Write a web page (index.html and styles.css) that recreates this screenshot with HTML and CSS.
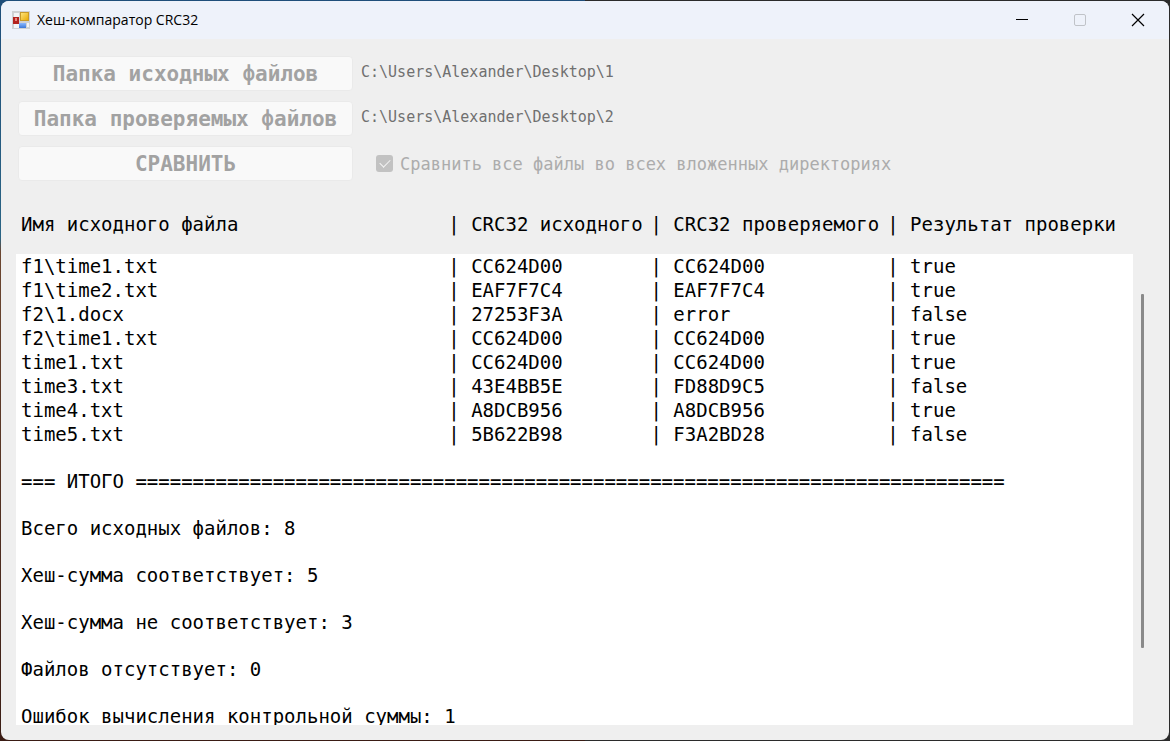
FILE: index.html
```
<!DOCTYPE html>
<html lang="ru">
<head>
<meta charset="utf-8">
<title>Хеш-компаратор CRC32</title>
<link rel="stylesheet" href="styles.css">
</head>
<body class="desktop">
<div class="window">
  <header class="titlebar">
    <svg class="app-icon" width="18" height="18" viewBox="0 0 18 18" aria-hidden="true">
      <defs>
        <linearGradient id="gold" x1="0" y1="0" x2="1" y2="1"><stop offset="0" stop-color="#ffe680"/><stop offset="1" stop-color="#e8a800"/></linearGradient>
        <linearGradient id="blue" x1="0" y1="0" x2="0" y2="1"><stop offset="0" stop-color="#8bb8ff"/><stop offset="1" stop-color="#3c78d8"/></linearGradient>
      </defs>
      <rect width="18" height="18" fill="#cfd1d4"/>
      <rect x="2" y="2" width="5" height="4" fill="#f3f4f6"/>
      <rect x="2" y="13" width="5" height="4" fill="#f3f4f6"/>
      <rect x="15" y="12" width="2" height="4" fill="#f3f4f6"/>
      <rect x="1" y="6" width="6" height="7" fill="#b3221e"/>
      <rect x="3" y="7" width="2" height="3" fill="#e8857f"/>
      <rect x="8.500" y="1.500" width="8" height="8" fill="url(#gold)" stroke="#c89a28"/>
      <rect x="7" y="12" width="7" height="5" fill="url(#blue)"/>
    </svg>
    <h1 class="title">Хеш-компаратор CRC32</h1>
    <div class="caption-buttons">
      <button class="caption" type="button" aria-label="Свернуть"><svg width="14" height="14" viewBox="0 0 14 14"><path d="M1 6.500H13" stroke="#000"/></svg></button>
      <button class="caption" type="button" aria-label="Развернуть" disabled><svg width="14" height="14" viewBox="0 0 14 14"><rect x="1.500" y="1.500" width="11" height="11" rx="1.500" fill="none" stroke="#c0c3c8"/></svg></button>
      <button class="caption" type="button" aria-label="Закрыть"><svg width="14" height="14" viewBox="0 0 14 14"><path d="M1 1L13 13M13 1L1 13" stroke="#000" stroke-width="1.200"/></svg></button>
    </div>
  </header>

  <main class="client">
    <section class="controls">
      <button class="action" type="button" disabled>Папка исходных файлов</button>
      <span class="path">C:\Users\Alexander\Desktop\1</span>
      <button class="action" type="button" disabled>Папка проверяемых файлов</button>
      <span class="path">C:\Users\Alexander\Desktop\2</span>
      <button class="action" type="button" disabled>СРАВНИТЬ</button>
      <label class="option" for="recursive">
        <input class="check" id="recursive" type="checkbox" checked disabled>
        Сравнить все файлы во всех вложенных директориях
      </label>
    </section>

    <section class="results">
      <div class="report">
        <table class="files">
          <colgroup><col class="col-name"><col class="col-source"><col class="col-checked"><col></colgroup>
          <thead>
            <tr><th>Имя исходного файла</th><th>| CRC32 исходного</th><th>| CRC32 проверяемого</th><th>| Результат проверки</th></tr>
          </thead>
          <tbody>
            <tr><td>f1\time1.txt</td><td>| CC624D00</td><td>| CC624D00</td><td>| true</td></tr>
            <tr><td>f1\time2.txt</td><td>| EAF7F7C4</td><td>| EAF7F7C4</td><td>| true</td></tr>
            <tr><td>f2\1.docx</td><td>| 27253F3A</td><td>| error</td><td>| false</td></tr>
            <tr><td>f2\time1.txt</td><td>| CC624D00</td><td>| CC624D00</td><td>| true</td></tr>
            <tr><td>time1.txt</td><td>| CC624D00</td><td>| CC624D00</td><td>| true</td></tr>
            <tr><td>time3.txt</td><td>| 43E4BB5E</td><td>| FD88D9C5</td><td>| false</td></tr>
            <tr><td>time4.txt</td><td>| A8DCB956</td><td>| A8DCB956</td><td>| true</td></tr>
            <tr><td>time5.txt</td><td>| 5B622B98</td><td>| F3A2BD28</td><td>| false</td></tr>
          </tbody>
        </table>
        <div class="summary">
          <p>=== ИТОГО ============================================================================</p>
          <p>Всего исходных файлов: 8</p>
          <p>Хеш-сумма соответствует: 5</p>
          <p>Хеш-сумма не соответствует: 3</p>
          <p>Файлов отсутствует: 0</p>
          <p>Ошибок вычисления контрольной суммы: 1</p>
        </div>
      </div>
      <div class="scrollbar"><div class="thumb"></div></div>
    </section>
  </main>
</div>
</body>
</html>
```
FILE: styles.css
```
* { box-sizing: border-box; }

.desktop {
  margin: 0;
  height: 100vh;
  padding: 1px;
  background: linear-gradient(90deg, transparent 50%, #2b2b2b 50%), linear-gradient(#1f4e7a 0, #2a6484 32%, #6b4630 34%, #3a1c14 100%);
  font-family: "DejaVu Sans Mono", "Liberation Mono", monospace;
  font-size: 19px;
  color: #000;
}

.window {
  height: 100%;
  display: flex;
  flex-direction: column;
  background: #efefef;
  border-radius: 8px;
  overflow: hidden;
}

.titlebar {
  flex: none;
  height: 38px;
  display: flex;
  align-items: center;
  gap: 7px;
  padding: 0 2px 0 11px;
  background: #eef2fa;
}

.app-icon { flex: none; }

.title {
  margin: 0;
  font: 400 14px/20px "Open Sans", "Noto Sans", sans-serif;
}

.caption-buttons {
  display: flex;
  align-self: stretch;
  margin-left: auto;
}

.caption {
  width: 58px;
  padding: 0;
  display: grid;
  place-items: center;
  border: 0;
  background: transparent;
}

.client {
  flex: 1;
  min-height: 0;
  display: flex;
  flex-direction: column;
  padding: 17px 16px 15px 15px;
}

.controls {
  display: grid;
  grid-template-columns: 335px 1fr;
  grid-auto-rows: 35px;
  gap: 10px 8px;
  padding-left: 2px;
}

.action {
  padding: 0;
  border: 1px solid #eaeaea;
  border-radius: 4px;
  background: #f9f9f9;
  color: #a2a2a2;
  font: bold 21px/24px "DejaVu Sans Mono", "Liberation Mono", monospace;
  white-space: nowrap;
}

.path {
  padding-top: 6px;
  font-size: 15px;
  line-height: 20px;
  color: #707070;
  white-space: nowrap;
}

.option {
  display: flex;
  align-items: center;
  gap: 7px;
  padding-left: 15px;
  font-size: 17px;
  color: #acacac;
  white-space: nowrap;
}

.check {
  appearance: none;
  flex: none;
  display: grid;
  place-items: center;
  width: 17px;
  height: 17px;
  margin: 0;
  border-radius: 3px;
  background: #c2c2c2;
}

.check::before {
  content: "";
  width: 9px;
  height: 5px;
  margin-bottom: 3px;
  border: solid #f4f4f4;
  border-width: 0 0 1px 1px;
  transform: rotate(-45deg);
}

.results {
  flex: 1;
  min-height: 0;
  display: flex;
  padding-top: 28px;
}

.report {
  flex: 1;
  min-width: 0;
  display: flex;
  flex-direction: column;
  overflow: hidden;
}

.files {
  flex: none;
  width: 100%;
  table-layout: fixed;
  border-collapse: collapse;
  line-height: 24px;
  white-space: nowrap;
}

.col-name { width: 38.700%; }
.col-source { width: 18.100%; }
.col-checked { width: 21.200%; }

.files th,
.files td {
  padding: 0;
  text-align: left;
  font-weight: 400;
}

.files th { padding: 3px 0 18px; }
.files th:first-child,
.files td:first-child { padding-left: 5px; }
.files tbody { background: #fff; }

.summary {
  flex: 1;
  min-height: 0;
  padding: 23px 5px 0;
  background: #fff;
  overflow: hidden;
  white-space: nowrap;
}

.summary p {
  margin: 0 0 23px;
  line-height: 24px;
}

.scrollbar {
  flex: none;
  width: 20px;
  padding: 85px 0 77px 8px;
  display: flex;
}

.thumb {
  width: 3px;
  border-radius: 1px;
  background: #8a8a8a;
}
```
